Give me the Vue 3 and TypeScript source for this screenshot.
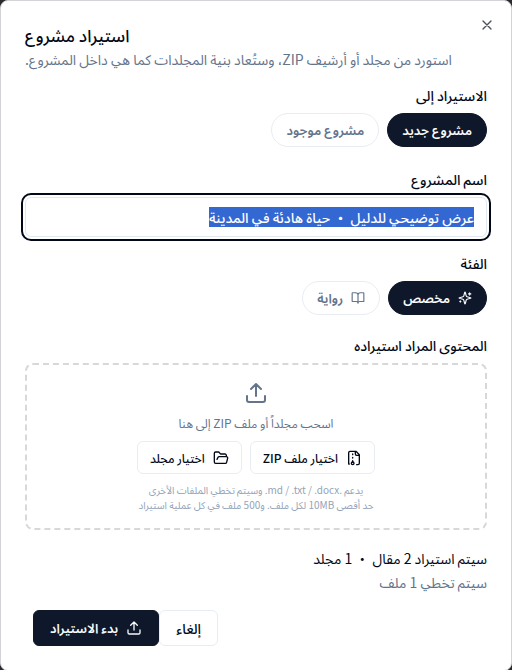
<script setup lang="ts">
import { onMounted, ref } from 'vue'

type Target = 'new' | 'existing'
type Category = 'custom' | 'novel'

const target = ref<Target>('new')
const category = ref<Category>('custom')
const projectName = ref('عرض توضيحي للدليل • حياة هادئة في المدينة')
const nameField = ref<HTMLInputElement | null>(null)

const targets: { id: Target; label: string }[] = [
  { id: 'new', label: 'مشروع جديد' },
  { id: 'existing', label: 'مشروع موجود' },
]

onMounted(() => {
  nameField.value?.focus()
  nameField.value?.select()
})
</script>

<template>
  <main class="dialog" dir="rtl" lang="ar" role="dialog" aria-labelledby="dialog-title">
    <button class="close" type="button" aria-label="إغلاق">
      <svg class="icon" viewBox="0 0 24 24"><path d="M18 6 6 18M6 6l12 12" /></svg>
    </button>

    <header class="header">
      <h1 id="dialog-title" class="title">استيراد مشروع</h1>
      <p class="description">استورد من مجلد أو أرشيف ZIP، وستُعاد بنية المجلدات كما هي داخل المشروع.</p>
    </header>

    <section class="field target">
      <h2 id="target-label" class="label">الاستيراد إلى</h2>
      <div class="pills" role="group" aria-labelledby="target-label">
        <button
          v-for="item in targets"
          :key="item.id"
          type="button"
          class="pill"
          :class="{ active: target === item.id }"
          :aria-pressed="target === item.id"
          @click="target = item.id"
        >{{ item.label }}</button>
      </div>
    </section>

    <section class="field">
      <label class="label" for="project-name">اسم المشروع</label>
      <input id="project-name" ref="nameField" v-model="projectName" class="input" type="text" autocomplete="off" spellcheck="false" />
    </section>

    <section class="field category">
      <h2 id="category-label" class="label">الفئة</h2>
      <div class="pills" role="group" aria-labelledby="category-label">
        <button type="button" class="pill" :class="{ active: category === 'custom' }" :aria-pressed="category === 'custom'" @click="category = 'custom'">
          <svg class="icon small" viewBox="0 0 24 24">
            <path d="M9.937 15.5A2 2 0 0 0 8.5 14.063l-6.135-1.582a.5.5 0 0 1 0-.962L8.5 9.936A2 2 0 0 0 9.937 8.5l1.582-6.135a.5.5 0 0 1 .963 0L14.063 8.5A2 2 0 0 0 15.5 9.937l6.135 1.581a.5.5 0 0 1 0 .964L15.5 14.063a2 2 0 0 0-1.437 1.437l-1.582 6.135a.5.5 0 0 1-.963 0z" />
            <path d="M20 3v4M22 5h-4M4 17v2M5 18H3" />
          </svg>
          مخصص
        </button>
        <button type="button" class="pill" :class="{ active: category === 'novel' }" :aria-pressed="category === 'novel'" @click="category = 'novel'">
          <svg class="icon small" viewBox="0 0 24 24">
            <path d="M12 7v14M3 18a1 1 0 0 1-1-1V4a1 1 0 0 1 1-1h5a4 4 0 0 1 4 4 4 4 0 0 1 4-4h5a1 1 0 0 1 1 1v13a1 1 0 0 1-1 1h-6a3 3 0 0 0-3 3 3 3 0 0 0-3-3z" />
          </svg>
          رواية
        </button>
      </div>
    </section>

    <section class="field">
      <h2 class="label">المحتوى المراد استيراده</h2>
      <div class="dropzone">
        <svg class="icon large" viewBox="0 0 24 24">
          <path d="M21 15v4a2 2 0 0 1-2 2H5a2 2 0 0 1-2-2v-4M17 8l-5-5-5 5M12 3v12" />
        </svg>
        <p class="drop-text">اسحب مجلداً أو ملف ZIP إلى هنا</p>
        <div class="pickers">
          <button type="button" class="button compact">
            <svg class="icon" viewBox="0 0 24 24">
              <path d="M16 22h2a2 2 0 0 0 2-2V7l-5-5H6a2 2 0 0 0-2 2v17h1M14 2v4a2 2 0 0 0 2 2h4M10 7V6M10 12v-1M10 18v-2" />
              <circle cx="10" cy="20" r="2" />
            </svg>
            اختيار ملف ZIP
          </button>
          <button type="button" class="button compact">
            <svg class="icon" viewBox="0 0 24 24">
              <path d="m6 14 1.5-2.9A2 2 0 0 1 9.24 10H20a2 2 0 0 1 1.94 2.5l-1.54 6a2 2 0 0 1-1.95 1.5H4a2 2 0 0 1-2-2V5a2 2 0 0 1 2-2h3.9a2 2 0 0 1 1.69.9l.81 1.2a2 2 0 0 0 1.67.9H18a2 2 0 0 1 2 2v2" />
            </svg>
            اختيار مجلد
          </button>
        </div>
        <p class="hint">يدعم .md / .txt / .docx. وسيتم تخطي الملفات الأخرى<br />حد أقصى 10MB لكل ملف. و500 ملف في كل عملية استيراد</p>
      </div>
    </section>

    <section class="summary">
      <p>سيتم استيراد 2 مقال • 1 مجلد</p>
      <p class="muted">سيتم تخطي 1 ملف</p>
    </section>

    <footer class="footer">
      <button type="button" class="button">إلغاء</button>
      <button type="button" class="button primary">
        <svg class="icon" viewBox="0 0 24 24">
          <path d="M21 15v4a2 2 0 0 1-2 2H5a2 2 0 0 1-2-2v-4M17 8l-5-5-5 5M12 3v12" />
        </svg>
        بدء الاستيراد
      </button>
    </footer>
  </main>
</template>

<style>
body {
  background: #2b2b2e;
}
</style>

<style scoped>
* {
  box-sizing: border-box;
}
.dialog {
  position: relative;
  display: flex;
  flex-direction: column;
  min-height: 100vh;
  padding: 24px;
  border: 1px solid #d4d4d8;
  border-radius: 8px;
  background: #fff;
  color: #020817;
  font-family: "Noto Sans CJK SC", "Noto Sans Arabic UI", "Noto Sans Arabic", sans-serif;
  font-size: 14px;
  line-height: 20px;
}
h1, h2, p {
  margin: 0;
}
button, input {
  font: inherit;
  color: inherit;
}
.icon {
  width: 16px;
  height: 16px;
  flex: none;
  fill: none;
  stroke: currentColor;
  stroke-width: 2;
  stroke-linecap: round;
  stroke-linejoin: round;
}
.icon.small {
  width: 14px;
  height: 14px;
}
.icon.large {
  width: 24px;
  height: 24px;
}
.close {
  position: absolute;
  top: 16px;
  right: 16px;
  display: flex;
  padding: 0;
  border: 0;
  background: none;
  opacity: 0.7;
}
.header {
  text-align: left;
}
.title {
  font-size: 17px;
  line-height: 20px;
  font-weight: 500;
}
.description {
  margin-top: 4px;
  color: #64748b;
}
.field {
  display: flex;
  flex-direction: column;
  gap: 8px;
  margin-top: 16px;
}
.target {
  padding-bottom: 6px;
}
.category {
  padding-bottom: 4px;
}
.label {
  font-size: 14px;
  line-height: 20px;
  font-weight: 500;
}
.pills {
  display: flex;
  gap: 8px;
}
.pill {
  display: flex;
  align-items: center;
  gap: 8px;
  height: 34px;
  padding: 0 14px;
  border: 1px solid #e8edf3;
  border-radius: 17px;
  background: #fff;
  color: #64748b;
  font-size: 13px;
  font-weight: 600;
}
.pill.active {
  border-color: #0f172a;
  background: #0f172a;
  color: #f8fafc;
}
.input {
  width: 100%;
  height: 40px;
  padding: 8px 12px;
  border: 1px solid #e2e8f0;
  border-radius: 6px;
  background: #fff;
  font-weight: 500;
  outline: none;
}
.input:focus {
  outline: 2px solid #020817;
  outline-offset: 2px;
}
.input::selection {
  background: #3367d1;
  color: #fff;
}
.dropzone {
  display: flex;
  flex-direction: column;
  align-items: center;
  padding: 16px;
  border: 2px dashed #d8d8da;
  border-radius: 8px;
  color: #64748b;
  text-align: center;
}
.drop-text {
  margin-top: 8px;
  font-size: 12px;
}
.pickers {
  display: flex;
  gap: 8px;
  margin-top: 8px;
}
.button {
  display: flex;
  align-items: center;
  gap: 8px;
  height: 36px;
  padding: 0 16px;
  border: 1px solid #e8edf3;
  border-radius: 6px;
  background: #fff;
  color: #020817;
  font-weight: 500;
}
.button.compact {
  height: 33px;
  padding: 0 12px;
  font-size: 12px;
}
.button.primary {
  border-color: #0f172a;
  background: #0f172a;
  color: #f8fafc;
  font-size: 13px;
  font-weight: 600;
}
.hint {
  margin-top: 8px;
  color: #94a3b8;
  font-size: 10px;
  line-height: 15px;
}
.summary {
  margin-top: 16px;
  line-height: 24px;
}
.muted {
  color: #64748b;
}
.footer {
  display: flex;
  justify-content: flex-end;
  margin-top: 16px;
  padding-left: 8px;
}
</style>
